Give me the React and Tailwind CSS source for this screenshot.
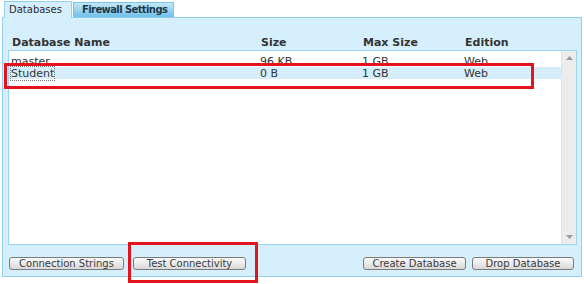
import React from "react";

const rows = [
  { name: "master", size: "96 KB", max: "1 GB", edition: "Web" },
  { name: "Student", size: "0 B", max: "1 GB", edition: "Web", selected: true },
];

const cols = "grid grid-cols-[249px_102px_102px_1fr]";

const Button = ({ label, width }) => (
  <button
    className={`${width} h-[13px] flex items-center justify-center rounded-[3px] border border-[#7a7a7a] bg-gradient-to-b from-[#fbfbfb] to-[#d9d9d9] text-[10px] leading-none text-[#3a3a3a]`}
  >
    {label}
  </button>
);

export default function App() {
  return (
    <div className="relative w-[584px] h-[284px] bg-white font-['DejaVu_Sans',sans-serif] text-[#333]">
      {/* tabs */}
      <div className="flex items-start h-[17px] pl-[4px] gap-[1px]">
        <div className="relative z-10 mt-[1px] h-[17px] w-[68px] border border-b-0 border-[#8fd0f0] bg-[#d6effc] pl-[4px] pt-[2px] text-[10px] leading-[12px] text-[#2a2a2a]">
          Databases
        </div>
        <div className="mt-[2px] h-[15px] w-[101px] border border-b-0 border-[#7cc4e8] bg-gradient-to-b from-[#c2e7f8] to-[#6fc0e8] pl-[8px] pt-[1px] text-[10px] leading-[12px] font-bold tracking-[-0.6px] text-[#1d3b4c]">
          Firewall Settings
        </div>
      </div>

      {/* panel */}
      <div className="mx-[2px] border border-[#8fd0f0] bg-[#d6effc]">
        <div className={`${cols} h-[32px] items-end pl-[9px] text-[11px] leading-[14px] font-bold text-[#333]`}>
          <span>Database Name</span>
          <span>Size</span>
          <span>Max Size</span>
          <span>Edition</span>
        </div>

        <div className="ml-[5px] mr-[4px] h-[195px] flex border border-[#9fd4f0] bg-white">
          <div className="flex-1 pt-[4px]">
            {rows.map((r) => (
              <div
                key={r.name}
                className={`${cols} h-[12px] pl-[2px] pt-[1px] text-[11px] leading-[12px] text-[#333] ${r.selected ? "bg-[#d6eefb]" : ""}`}
              >
                <span>
                  <span className={r.selected ? "outline outline-1 outline-dotted outline-[#777]" : ""}>{r.name}</span>
                </span>
                <span>{r.size}</span>
                <span>{r.max}</span>
                <span>{r.edition}</span>
              </div>
            ))}
          </div>
          <div className="w-[15px] flex flex-col items-center justify-between bg-[#ececec] border-l border-[#e2e2e2] py-[5px]">
            <svg width="7" height="4" viewBox="0 0 7 4">
              <path d="M3.5 0 L7 4 L0 4 Z" fill="#9a9a9a" />
            </svg>
            <svg width="7" height="4" viewBox="0 0 7 4">
              <path d="M0 0 L7 0 L3.5 4 Z" fill="#9a9a9a" />
            </svg>
          </div>
        </div>

        <div className="flex justify-between mt-[12px] pl-[6px] pr-[7px] pb-[6px]">
          <div className="flex gap-[9px]">
            <Button label="Connection Strings" width="w-[115px]" />
            <Button label="Test Connectivity" width="w-[113px]" />
          </div>
          <div className="flex gap-[6px]">
            <Button label="Create Database" width="w-[103px]" />
            <Button label="Drop Database" width="w-[102px]" />
          </div>
        </div>
      </div>

      {/* annotation boxes */}
      <div className="absolute left-[4px] top-[63px] w-[530px] h-[26px] border-[3px] border-[#e3141b]" />
      <div className="absolute left-[128px] top-[242px] w-[130px] h-[41px] border-[3px] border-[#e3141b]" />
    </div>
  );
}
